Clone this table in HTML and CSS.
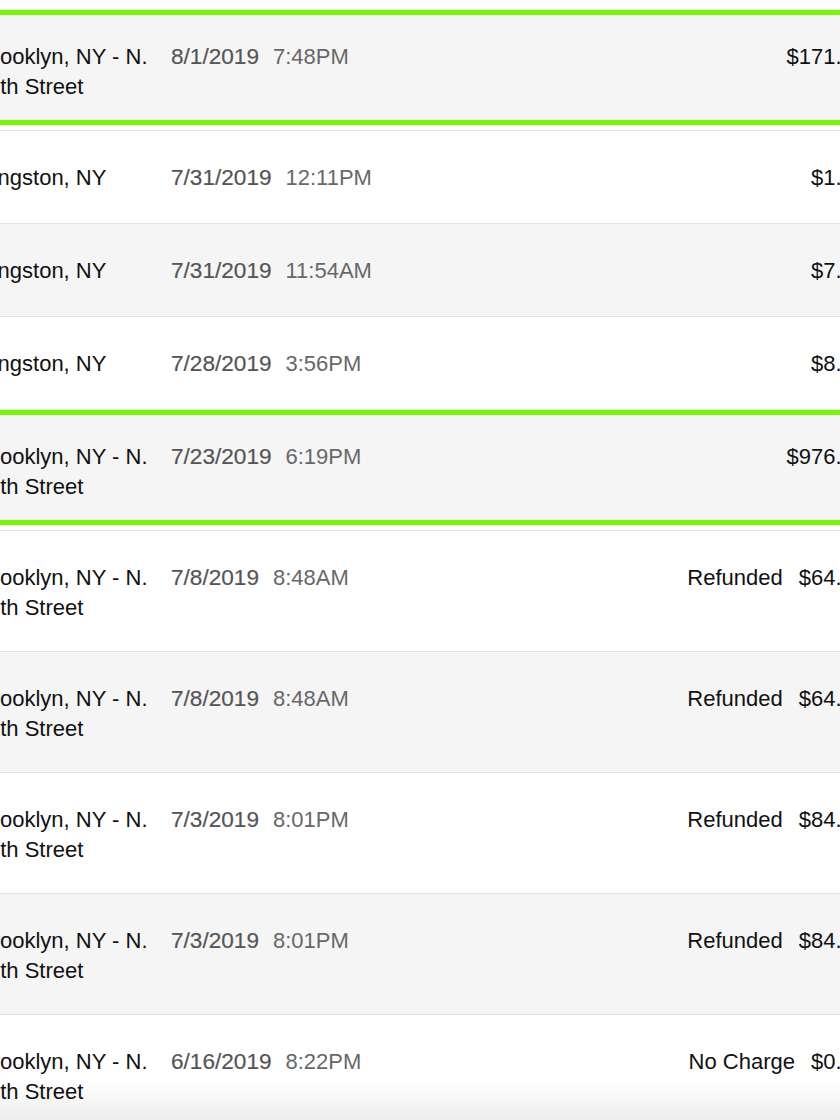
FILE: index.html
```html
<!DOCTYPE html>
<html lang="en">
<head>
<meta charset="utf-8">
<meta name="viewport" content="width=device-width, initial-scale=1.0">
<title>Transactions</title>
<link rel="stylesheet" href="styles.css">
</head>
<body>

<div class="list">
    <div class="spacer"></div>
    <div class="row odd selected">
        <div class="loc">Brooklyn, NY - N. 8th Street</div>
        <div class="when"><span class="date">8/1/2019</span><span class="time">7:48PM</span></div>
        <div class="amount"><span class="price">$171.52</span></div>
    </div>
    <div class="row">
        <div class="loc">Kingston, NY</div>
        <div class="when"><span class="date">7/31/2019</span><span class="time">12:11PM</span></div>
        <div class="amount"><span class="price">$1.05</span></div>
    </div>
    <div class="row odd">
        <div class="loc">Kingston, NY</div>
        <div class="when"><span class="date">7/31/2019</span><span class="time">11:54AM</span></div>
        <div class="amount"><span class="price">$7.80</span></div>
    </div>
    <div class="row">
        <div class="loc">Kingston, NY</div>
        <div class="when"><span class="date">7/28/2019</span><span class="time">3:56PM</span></div>
        <div class="amount"><span class="price">$8.25</span></div>
    </div>
    <div class="row odd selected">
        <div class="loc">Brooklyn, NY - N. 8th Street</div>
        <div class="when"><span class="date">7/23/2019</span><span class="time">6:19PM</span></div>
        <div class="amount"><span class="price">$976.40</span></div>
    </div>
    <div class="row">
        <div class="loc">Brooklyn, NY - N. 8th Street</div>
        <div class="when"><span class="date">7/8/2019</span><span class="time">8:48AM</span></div>
        <div class="amount"><span class="status">Refunded</span><span class="price">$64.13</span></div>
    </div>
    <div class="row odd">
        <div class="loc">Brooklyn, NY - N. 8th Street</div>
        <div class="when"><span class="date">7/8/2019</span><span class="time">8:48AM</span></div>
        <div class="amount"><span class="status">Refunded</span><span class="price">$64.13</span></div>
    </div>
    <div class="row">
        <div class="loc">Brooklyn, NY - N. 8th Street</div>
        <div class="when"><span class="date">7/3/2019</span><span class="time">8:01PM</span></div>
        <div class="amount"><span class="status">Refunded</span><span class="price">$84.60</span></div>
    </div>
    <div class="row odd">
        <div class="loc">Brooklyn, NY - N. 8th Street</div>
        <div class="when"><span class="date">7/3/2019</span><span class="time">8:01PM</span></div>
        <div class="amount"><span class="status">Refunded</span><span class="price">$84.60</span></div>
    </div>
    <div class="row">
        <div class="loc">Brooklyn, NY - N. 8th Street</div>
        <div class="when"><span class="date">6/16/2019</span><span class="time">8:22PM</span></div>
        <div class="amount"><span class="status">No Charge</span><span class="price">$0.00</span></div>
    </div>
</div>
<div class="fade"></div>

</body>
</html>
```

FILE: styles.css
```css
* {
    box-sizing: border-box;
}
html, body {
    margin: 0;
    height: 100%;
    overflow: hidden;
    background-color: white;
}
.list {
    font-family: "Liberation Sans", Arial, Helvetica, sans-serif;
    font-size: 22px;
    line-height: 30px;
    color: #111;
    width: 888px;
    margin-left: -22px;
}
.spacer {
    height: 10px;
}
.row {
    position: relative;
    display: flex;
    align-items: flex-start;
    min-height: 93px;
    padding: 32px 0 28px;
    border-bottom: 1px solid #e3e3e3;
    background-color: white;
}
.row.odd {
    background-color: #f5f5f5;
}
.row.selected {
    background-color: white;
}
.row.selected:before {
    content: "";
    position: absolute;
    left: 0;
    right: 0;
    top: 0;
    bottom: 5px;
    border-top: 5px solid #78f800;
    border-bottom: 5px solid #78f800;
    background-color: #f5f5f5;
}
.loc, .when, .amount {
    position: relative;
}
.loc {
    width: 176px;
    flex-shrink: 0;
    padding-left: 10px;
    text-indent: -10px;
}
.when {
    margin-left: 17px;
    white-space: nowrap;
}
.date {
    font-size: 22.6px;
    color: #555;
    -webkit-text-stroke: 0.2px #555;
    margin-right: 14px;
}
.time {
    color: #686868;
}
.amount {
    margin-left: auto;
    white-space: nowrap;
}
.status {
    margin-right: 16px;
}
.fade {
    position: fixed;
    left: 0;
    right: 0;
    bottom: 0;
    height: 40px;
    background: linear-gradient(to bottom, rgba(0,0,0,0), rgba(0,0,0,0.07));
}
```
